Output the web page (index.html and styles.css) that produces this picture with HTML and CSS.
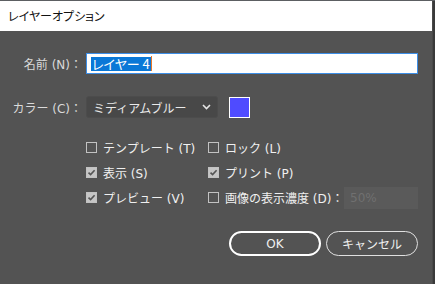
FILE: index.html
```html
<!DOCTYPE html>
<html lang="ja">
<head>
<meta charset="utf-8">
<title>レイヤーオプション</title>
<link rel="stylesheet" href="styles.css">
</head>
<body>
<div class="screen">
  <div class="dialog">
    <div class="titlebar">レイヤーオプション</div>
    <div class="content">
      <div class="row row-name">
        <label class="label">名前 (N)：</label>
        <div class="textfield"><span class="sel">レイヤー 4</span><span class="caret"></span></div>
      </div>
      <div class="row row-color">
        <label class="label">カラー (C)：</label>
        <div class="select">
          <span>ミディアムブルー</span>
          <svg class="chev" width="9" height="6" viewBox="0 0 9 6"><path d="M1 1 L4.5 4.5 L8 1" fill="none" stroke="#e6e6e6" stroke-width="1.6"/></svg>
        </div>
        <div class="swatch"></div>
      </div>
      <div class="checks">
        <div class="check"><span class="box"></span>テンプレート (T)</div>
        <div class="check"><span class="box"></span>ロック (L)</div>
        <div class="check"><span class="box on"><svg width="9" height="9" viewBox="0 0 9 9"><path d="M1.5 4.6 L3.6 6.6 L7.6 2.2" fill="none" stroke="#555" stroke-width="1.6"/></svg></span>表示 (S)</div>
        <div class="check"><span class="box on"><svg width="9" height="9" viewBox="0 0 9 9"><path d="M1.5 4.6 L3.6 6.6 L7.6 2.2" fill="none" stroke="#555" stroke-width="1.6"/></svg></span>プリント (P)</div>
        <div class="check"><span class="box on"><svg width="9" height="9" viewBox="0 0 9 9"><path d="M1.5 4.6 L3.6 6.6 L7.6 2.2" fill="none" stroke="#555" stroke-width="1.6"/></svg></span>プレビュー (V)</div>
        <div class="check"><span class="box"></span>画像の表示濃度 (D)：<span class="dim">50%</span></div>
      </div>
      <div class="buttons">
        <button class="btn primary">OK</button>
        <button class="btn">キャンセル</button>
      </div>
    </div>
  </div>
  <div class="edge"></div>
</div>
</body>
</html>
```
FILE: styles.css
```css
html, body {
  margin: 0;
  padding: 0;
}
body {
  width: 435px;
  height: 284px;
  overflow: hidden;
  background: #3b3b3b;
  font-family: "DejaVu Sans", "Noto Sans CJK JP", sans-serif;
}
.screen {
  display: flex;
  height: 284px;
  border-top: 1px solid #5c5f62;
  box-sizing: border-box;
}
.dialog {
  width: 432px;
  display: flex;
  flex-direction: column;
}
.edge {
  flex: 1;
  background: #3a3a3a;
  border-left: 1px solid #4a4a4a;
}
.titlebar {
  height: 30px;
  background: #ffffff;
  color: #111;
  font-family: "Noto Sans CJK JP", sans-serif;
  font-size: 12px;
  line-height: 30px;
  padding-left: 8px;
  font-feature-settings: "palt";
}
.content {
  flex: 1;
  background: #535353;
  padding: 22px 14px 0 0;
  color: #dedede;
  font-size: 12px;
}
.row {
  display: flex;
  align-items: center;
}
.label {
  width: 82px;
  padding-right: 4px;
  text-align: right;
  white-space: nowrap;
  color: #dadada;
}
.row-name {
  height: 21px;
}
.textfield {
  flex: 1;
  height: 21px;
  box-sizing: border-box;
  background: #fff;
  border: 1px solid #3d8ee6;
  display: flex;
  align-items: center;
  padding-left: 4px;
}
.sel {
  background: #0a78d7;
  color: #fff;
  font-family: "Noto Sans CJK JP", sans-serif;
  font-size: 13px;
  line-height: 14px;
  height: 14px;
  padding: 0 1px;
  font-feature-settings: "palt";
}
.caret {
  width: 1px;
  height: 15px;
  background: #e8782a;
}
.row-color {
  margin-top: 22px;
  height: 22px;
}
.select {
  width: 132px;
  height: 22px;
  box-sizing: border-box;
  background: #484848;
  border: 1px solid #4c4c4c;
  border-radius: 3px;
  display: flex;
  align-items: center;
  justify-content: space-between;
  padding: 0 6px 0 6px;
  color: #eaeaea;
  font-size: 12px;
}
.swatch {
  margin-left: 11px;
  width: 21px;
  height: 21px;
  box-sizing: border-box;
  border: 1px solid #ffffff;
  background: #4f4bff;
}
.checks {
  margin: 17px 0 0 86px;
  display: grid;
  grid-template-columns: 122px 1fr;
  grid-auto-rows: 25px;
}
.check {
  display: flex;
  align-items: center;
  color: #f0f0f0;
  font-size: 12px;
  white-space: nowrap;
}
.box {
  width: 11px;
  height: 11px;
  box-sizing: border-box;
  border: 1px solid #c2c2c2;
  margin-right: 6px;
  display: flex;
  align-items: center;
  justify-content: center;
}
.box.on {
  background: #c6c6c6;
}
.dim {
  margin-left: auto;
  width: 74px;
  height: 22px;
  box-sizing: border-box;
  background: #5a5a5a;
  color: #707070;
  padding-left: 6px;
  line-height: 22px;
}
.buttons {
  margin-top: 21px;
  display: flex;
  justify-content: flex-end;
  gap: 5px;
}
.btn {
  width: 92px;
  height: 25px;
  box-sizing: border-box;
  border-radius: 13px;
  background: transparent;
  border: 1px solid #e0e0e0;
  color: #f0f0f0;
  font-family: "DejaVu Sans", "Noto Sans CJK JP", sans-serif;
  font-size: 12px;
  padding: 0;
}
.btn.primary {
  border: 2px solid #ffffff;
}
```
